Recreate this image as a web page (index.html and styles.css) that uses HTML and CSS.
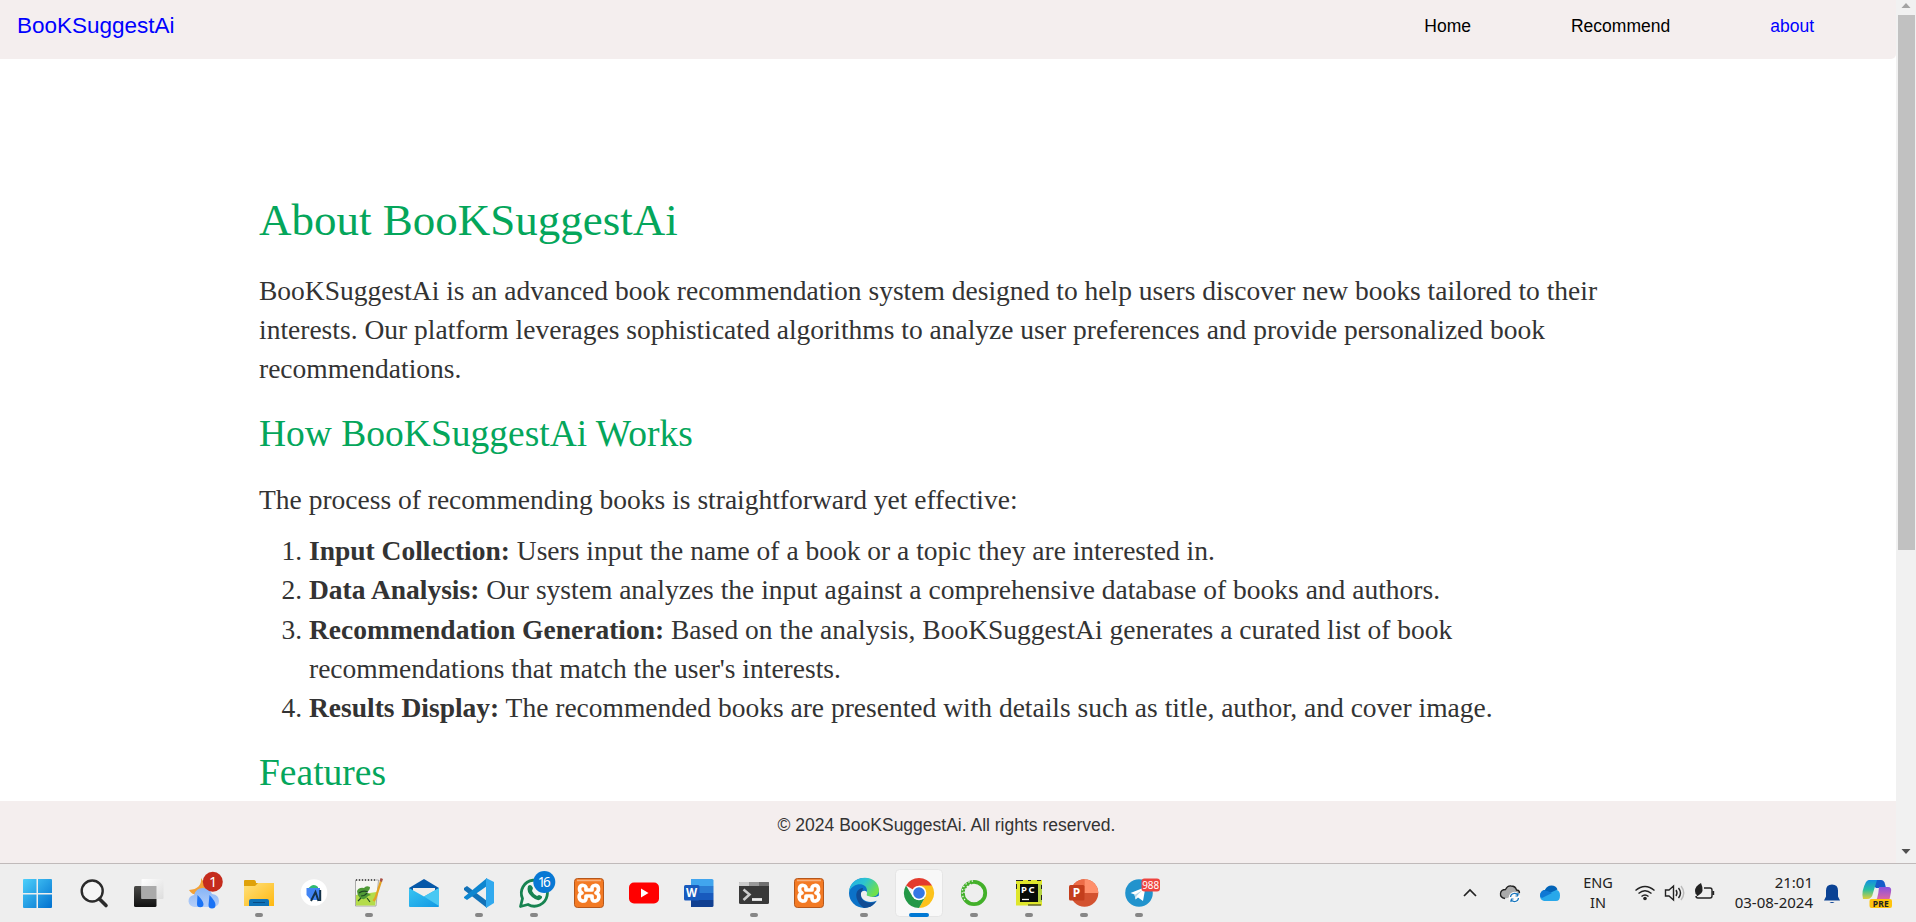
FILE: index.html
```html
<!DOCTYPE html>
<html lang="en">
<head>
<meta charset="utf-8">
<title>About BooKSuggestAi</title>
<link rel="stylesheet" href="styles.css">
</head>
<body>
<div class="screen">
  <div class="browser">
    <div class="page">
      <header class="nav">
        <a class="brand">BooKSuggestAi</a>
        <nav class="links"><a class="home">Home</a><a class="rec">Recommend</a><a class="active">about</a></nav>
      </header>
      <main class="content">
        <h1>About BooKSuggestAi</h1>
        <p class="intro">BooKSuggestAi is an advanced book recommendation system designed to help users discover new books tailored to their<br>interests. Our platform leverages sophisticated algorithms to analyze user preferences and provide personalized book<br>recommendations.</p>
        <h2 class="works">How BooKSuggestAi Works</h2>
        <p class="process">The process of recommending books is straightforward yet effective:</p>
        <ol>
          <li><b>Input Collection:</b> Users input the name of a book or a topic they are interested in.</li>
          <li><b>Data Analysis:</b> Our system analyzes the input against a comprehensive database of books and authors.</li>
          <li><b>Recommendation Generation:</b> Based on the analysis, BooKSuggestAi generates a curated list of book<br>recommendations that match the user's interests.</li>
          <li><b>Results Display:</b> The recommended books are presented with details such as title, author, and cover image.</li>
        </ol>
        <h2 class="features">Features</h2>
      </main>
      <footer class="foot">© 2024 BooKSuggestAi. All rights reserved.</footer>
    </div>
    <div class="scroll">
      <svg width="20" height="15" viewBox="0 0 20 15"><path d="M5.500 8h9L10 3z" fill="#a3a3a3"/></svg>
      <div class="thumb"></div>
      <svg class="down" width="20" height="20" viewBox="0 0 20 20"><path d="M5.500 6h9L10 11z" fill="#505050"/></svg>
    </div>
  </div>
  <div class="taskbar">
    <div class="apps">
      <svg viewBox="9 864 55 58"><defs><linearGradient id="win" x1="0" y1="0" x2="1" y2="1"><stop offset="0" stop-color="#4dd0fb"/><stop offset="1" stop-color="#0070cf"/></linearGradient></defs><path fill="url(#win)" d="M24 879h12.500v14H23v-13q0-1 1-1zM38 879h13q1 0 1 1v13H38zM23 894.500h13.500V908H24q-1 0-1-1zM38 894.500h14V907q0 1-1 1H38z"/></svg>
      <svg viewBox="64 864 55 58"><circle cx="92.200" cy="891" r="10.500" fill="#f5f5f5" stroke="#2b2b2b" stroke-width="2.400"/><path d="M99.500 899l6.500 6.500" stroke="#2b2b2b" stroke-width="3.600" stroke-linecap="round"/></svg>
      <svg viewBox="119 864 55 58"><defs><linearGradient id="tv" x1="0" y1="0" x2="0" y2="1"><stop offset="0" stop-color="#4a4a48"/><stop offset="1" stop-color="#111"/></linearGradient><linearGradient id="tw" x1="0" y1="0" x2="1" y2="1"><stop offset="0" stop-color="#fff"/><stop offset="1" stop-color="#ddd"/></linearGradient></defs><rect x="134" y="886" width="22.500" height="21" rx="1.500" fill="url(#tv)"/><rect x="141.500" y="879" width="22" height="20" rx="1" fill="url(#tw)"/><path d="M141.500 886h15v13h-15z" fill="#aaa"/></svg>
      <svg viewBox="174 864 55 58"><defs><linearGradient id="cl" x1="0" y1="0" x2="0" y2="1"><stop offset="0" stop-color="#87b5f7"/><stop offset="1" stop-color="#b5cef8"/></linearGradient></defs><path d="M201 878q1 11-12 12 4 7 14 4l5-6z" fill="#f2a238"/><path d="M195 907a6 6 0 0 1-1-12q2-7 9-7 7 0 9 6 7 1 7 7 0 6-7 6z" fill="url(#cl)"/><path d="M197.500 895q6 6 6 9a3.200 3.200 0 0 1-6.500 0zM209.500 895q6.500 7 6 10a3.500 3.500 0 0 1-7 0z" fill="#1972f5"/><circle cx="212.800" cy="881.800" r="10" fill="#c42b1c"/><text x="213.200" y="887" text-anchor="middle" font-size="14.500" fill="#fff">1</text></svg>
      <svg viewBox="229 864 55 58"><defs><linearGradient id="fo" x1="0" y1="0" x2="1" y2="1"><stop stop-color="#ffe17c"/><stop offset="1" stop-color="#ffb810"/></linearGradient></defs><path d="M244 888v-7q0-1 1-1h9q2 0 2 3h17q1 0 1 1v5z" fill="#dfa108"/><path d="M244 886h11l3-3h16v23h-30z" fill="url(#fo)"/><path d="M249 906v-5q0-2 2-2h16q2 0 2 2v5z" fill="#0f73b8"/><path d="M253 902.500h12" stroke="#084c85"/><rect class="dot" x="255" y="913" width="8" height="4" rx="2"/></svg>
      <svg viewBox="284 864 55 58"><circle cx="314" cy="892.500" r="13.300" fill="#fff"/><path d="M308 889q5-7 10-2v3h-10z" fill="#30ba72"/><path d="M306.500 888h13.500v12h-9l-4.500-5z" fill="#4285f4"/><path d="M311 901l4.500-9 3 9M320.200 890v11" fill="none" stroke="#143248" stroke-width="2"/></svg>
      <svg viewBox="339 864 55 58"><path d="M355.500 880h23l-2.500 26h-20.500z" fill="#f6f6f2" stroke="#999" stroke-width=".8"/><path d="M356 880h21" stroke="#333" stroke-width="1.600" stroke-dasharray="1 2"/><path d="M356 895l20.500-3-1.300 13.500H356z" fill="#b4dc4a"/><path d="M357 891q2-4 7-3 2-3 6-1 0 4-4 5l5 3-3 1q-3 5-8 2-3-3-3-7z" fill="#4f9a35"/><path d="M359 893q4-3 9-1m-7 4q4 0 6-3m-9 8l3-3m6 0l3 4" fill="none" stroke="#1f4a24" stroke-width="1.200"/><path d="M381 881l-5.500 17-2 3" fill="none" stroke="#e3a322" stroke-width="2.300"/><path d="M380.800 881.500l1-3" stroke="#a95045" stroke-width="2.500"/><rect class="dot" x="365" y="913" width="8" height="4" rx="2"/></svg>
      <svg viewBox="394 864 55 58"><defs><linearGradient id="ml" x1="0" y1="0" x2="1" y2="1"><stop stop-color="#38c5f2"/><stop offset="1" stop-color="#1298e3"/></linearGradient></defs><path d="M409 888l15-9 15 9v8h-30z" fill="#0758a8"/><path d="M413 888h22v10h-22z" fill="#f1eeeb"/><path d="M409 888l15 8.500 15-8.500v18q0 1-1 1h-28q-1 0-1-1z" fill="url(#ml)"/><path d="M424 896.500l15-8.500v18z" fill="#49c8f3"/></svg>
      <svg viewBox="449 864 55 58"><path d="M464 888l3-2 20 15v7L464 890z" fill="#1271b7"/><path d="M464 897l23-19v8l-20 14-3-2z" fill="#0d86d0"/><path d="M486 878l8 4v21l-8 5z" fill="#31a9ee"/><rect class="dot" x="475" y="913" width="8" height="4" rx="2"/></svg>
      <svg viewBox="504 864 55 58"><path d="M520.500 906.500l2-8a13 13 0 1 1 5.500 6z" fill="#f2f5f3" stroke="#178350" stroke-width="2.800" stroke-linejoin="round"/><path d="M528 886q3-3 5 2l-1 3q2 4 5 5l2-1q5 1 2 4-3 3-9-2-6-5-4-11z" fill="#178350"/><circle cx="544.300" cy="882" r="11" fill="#0878d4"/><text x="544.300" y="887" text-anchor="middle" font-size="13.500" textLength="13" fill="#fff">16</text><rect class="dot" x="530" y="913" width="8" height="4" rx="2"/></svg>
      <svg viewBox="559 864 55 58"><g id="xampp"><rect x="574.500" y="878.500" width="29" height="29" rx="3" fill="#f37a24" stroke="#b5571b"/><path d="M577 880.500h24" stroke="#f6b27f" stroke-width="1.500"/><path d="M583.500 885.500c-5-1-5 6-1.500 7.500-4.500 1-3.500 8.500 1.500 8 3 0 2.500-3.500 2.500-5h6c0 1.500-.5 5 2.500 5 5 .5 6-7 1.500-8 3.500-1.500 3.500-8.500-1.500-7.500-3 0-2.500 3-2.500 4.500h-6c0-1.500.5-4.500-2.500-4.500z" fill="none" stroke="#fff" stroke-width="3.700" stroke-linejoin="round"/></g></svg>
      <svg viewBox="614 864 55 58"><rect x="629" y="882.500" width="30" height="21" rx="5" fill="#f00"/><path d="M641 888.500v9l7.500-4.500z" fill="#fff"/></svg>
      <svg viewBox="669 864 55 58"><path d="M691 879h21q1.500 0 1.500 1.500V886H691z" fill="#41a5ee"/><path d="M691 886h22.500v7H691z" fill="#2b7cd3"/><path d="M691 893h22.500v7H691z" fill="#185abd"/><path d="M691 900h22.500v5.500q0 1.500-1.500 1.500h-21z" fill="#103f91"/><rect x="684" y="885" width="15.500" height="15.500" rx="1.500" fill="#185abd"/><text x="691.600" y="896.800" font-size="11.500" font-weight="bold" text-anchor="middle" fill="#fff">W</text></svg>
      <svg viewBox="724 864 55 58"><rect x="739" y="882" width="30" height="22" rx="1.500" fill="#393939"/><path d="M739 886v-3q0-1 1-1h9v4z" fill="#ccc"/><path d="M749 882h10v4h-10z" fill="#999"/><path d="M759 882h9q1 0 1 1v3h-10z" fill="#707070"/><path d="M743.500 889.500l6 5-6 5.500" fill="none" stroke="#ccc" stroke-width="2.500"/><path d="M752 899.500h10" stroke="#eee" stroke-width="2.800"/><rect class="dot" x="750" y="913" width="8" height="4" rx="2"/></svg>
      <svg viewBox="559 864 55 58"><use href="#xampp"/></svg>
      <svg viewBox="834 864 55 58"><defs><linearGradient id="ed" x1="0" y1="0" x2="1" y2=".5"><stop stop-color="#23a9e9"/><stop offset=".5" stop-color="#2cc4cf"/><stop offset="1" stop-color="#70e04b"/></linearGradient></defs><circle cx="864" cy="893" r="15" fill="#0b72c8"/><path d="M849 892c1-18 29-19 30-2 0 7-7 8-12 6-3-1 0-2 0-5 0-9-14-9-18 1z" fill="url(#ed)"/><path d="M863 888c-10 1-8 14 1 19.900 5 .1 9-2 12-6.500-8 4-18-2-14-9z" fill="#114c94"/><path d="M861 893c-1 7 7 11 15 8l4-1v-5c-4 3-9 2-12 1-2-1-1-1-1-3 0-3-5-3-6 0z" fill="#eee"/><rect class="dot" x="860" y="913" width="8" height="4" rx="2"/></svg>
      <svg viewBox="889 864 55 58"><rect x="895.500" y="869.500" width="47" height="47" rx="4" fill="#f8f8f8" stroke="#e5e5e5"/><path d="M919 893L906 885.500A15 15 0 0 1 932 885.500z" fill="#e33b2e"/><path d="M919 885.500h13A15 15 0 0 1 919 908l6.500-11.500z" fill="#fcc21b"/><path d="M912.500 896.500L906 885.500A15 15 0 0 0 919 908l6.500-11.500z" fill="#249847"/><circle cx="919" cy="893" r="7.300" fill="#fff"/><circle cx="919" cy="893" r="5.800" fill="#3578e5"/><rect x="909" y="913" width="20" height="4" rx="2" fill="#0078d4"/></svg>
      <svg viewBox="944 864 55 58"><circle cx="974" cy="893" r="11.200" fill="none" stroke="#43b02a" stroke-width="3.800"/><path d="M965 900a11.500 11.500 0 0 1 8.500-19M964 893a10 10 0 0 1 9-9" fill="none" stroke="#eee" stroke-width="1.300" stroke-dasharray="1.400 2"/><rect class="dot" x="970" y="913" width="8" height="4" rx="2"/></svg>
      <svg viewBox="999 864 55 58"><path d="M1016 880h26v25.500h-26z" fill="#dfe62b"/><path d="M1038 884h4v18h-4z" fill="#b5d342"/><path d="M1016 880.500h7M1028 880.500h3M1037 880.500h4M1016.500 884v5M1041.500 885v4M1041.500 895v5M1028 905h13" stroke="#222"/><path d="M1020 884h18v18h-18z" fill="#080c08"/><text x="1021" y="892.700" font-size="9.500" font-weight="bold" fill="#fff" textLength="13.500">PC</text><path d="M1022 899.500h7" stroke="#fff" stroke-width="1.300"/><rect class="dot" x="1025" y="913" width="8" height="4" rx="2"/></svg>
      <svg viewBox="1054 864 55 58"><circle cx="1084.500" cy="893" r="13.800" fill="#d35230"/><path d="M1084.500 879.200a13.800 13.800 0 0 0-13.800 13.800h13.800z" fill="#ed6c47"/><path d="M1084.500 879.200a13.800 13.800 0 0 1 13.800 13.800h-13.800z" fill="#ff8f6b"/><rect x="1069" y="885" width="15.500" height="15.500" rx="1.500" fill="#c43e1c"/><text x="1076.500" y="897" font-size="12" font-weight="bold" text-anchor="middle" fill="#fff">P</text><rect class="dot" x="1080" y="913" width="8" height="4" rx="2"/></svg>
      <svg viewBox="1109 864 55 58"><circle cx="1139" cy="893" r="13.800" fill="#2193cd"/><path d="M1130.500 893l15-6-2.500 14-5-3.500-2.500 2-1-5z" fill="#fff"/><path d="M1134.500 895l8-5-6 6-.5 3z" fill="#b7d8e9"/><rect x="1141.500" y="878.500" width="18.500" height="13" rx="3" fill="#ee4540"/><text x="1150.700" y="889.200" font-size="11.500" text-anchor="middle" textLength="17" lengthAdjust="spacingAndGlyphs" fill="#fff">988</text><rect class="dot" x="1135" y="913" width="8" height="4" rx="2"/></svg>
    </div>
    <div class="tray">
      <svg class="status" viewBox="1450 864 120 58"><path d="M1464 896l6-6 6 6" fill="none" stroke="#222" stroke-width="1.700"/><path d="M1505 898.500q-5-1-4.500-5t5-4q2-4 5.500-3.500 4.500 0 5.500 4 4 0 3 5z" fill="#aaa"/><path d="M1505 898.500q-5-1-4.500-5t5-4q2-4 5.500-3.500 4.500 0 5.500 4 3 0 3 3" fill="none" stroke="#222" stroke-width="1.300"/><circle cx="1514.500" cy="897.500" r="5.800" fill="#fafafa"/><path d="M1510.500 897a4 4 0 0 1 7.500-1.500v-2.500m0 3h-2.500M1518.500 898a4 4 0 0 1-7.500 1.500v2.500m0-3h2.500" fill="none" stroke="#1474bd" stroke-width="1.200"/><path d="M1544 901q-4-1-4-5 0-5 5-6 2-4 6-4 4 0 5.500 4 3.500.5 3.500 5.500 0 5.500-4 5.500z" fill="#28a8ea"/><path d="M1541 893q1-3 4-3 2-4.500 6.500-4.500 4.500 0 6 4l-9 4z" fill="#0364b8"/><path d="M1540 896q0-5 4-5.500 3-.5 8 2.500l-10 5q-2-1-2-2z" fill="#0f78d4"/></svg>
      <div class="lang">ENG<br>IN</div>
      <svg class="system" viewBox="1630 864 95 58"><g fill="none" stroke="#222" stroke-width="1.400"><path d="M1635.500 890.500q9.500-8 19 0M1638.500 893.500q6.500-5.500 13 0M1641.500 896.500q3.500-3 7 0"/><path d="M1665.500 890h3.500l4.500-4v14l-4.500-4h-3.500zM1676 890q2 3 0 6M1678.500 888q4 5 0 10"/><path d="M1681 886q5.500 7 0 14" stroke="#bbb"/><path d="M1704 888h6q2 0 2 2v6q0 2-2 2h-12q-2 0-2-2M1713.500 891v4"/></g><circle cx="1645" cy="898.500" r="1.800" fill="#222"/><path d="M1701 883q-6 3-6 8 0 3 2 4l-1 2 3-2q6-3 2-12z" fill="#222"/></svg>
      <div class="clock">21:01<br>03-08-2024</div>
      <svg class="end" viewBox="1820 864 96 58"><defs><linearGradient id="co" x1="0" y1="0" x2="0" y2="1"><stop stop-color="#128ee2"/><stop offset=".5" stop-color="#28bfa2"/><stop offset="1" stop-color="#e2ce38"/></linearGradient><linearGradient id="cp" x1="0" y1="0" x2="0" y2="1"><stop stop-color="#8852df"/><stop offset="1" stop-color="#f16b93"/></linearGradient></defs><path d="M1824 900.500l2-4v-6q0-6 6-6t6 6v6l2 4z" fill="#0a4294"/><path d="M1829.500 902h5q-2.500 2-5 0z" fill="#0a4294"/><path d="M1868 880h13q3 0 4 4l1 4h-10z" fill="#155cc9"/><path d="M1863 899q-2-8 3-17 1-2 4-2h7l-4 13q-1 6-6 6z" fill="url(#co)"/><path d="M1879 887h9q4 0 3 5l-2 10h-15q4-1 5-15z" fill="url(#cp)"/><rect x="1869.500" y="899" width="22.500" height="9" rx="2" fill="#ffc40c"/><text x="1880.700" y="906.800" font-size="8.500" font-weight="bold" text-anchor="middle" textLength="16" fill="#222">PRE</text></svg>
    </div>
  </div>
</div>
</body>
</html>
```
FILE: styles.css
```css
* { box-sizing: border-box; }
body { margin: 0; overflow: hidden; background: #fff; }
.screen { width: 1916px; height: 922px; display: flex; flex-direction: column; }
.browser { height: 863px; display: flex; }
.page { width: 1896px; display: flex; flex-direction: column; }
.nav { height: 59px; flex: none; background: #f4eeee; border-radius: 0 0 5px 0; display: flex; justify-content: space-between; font-family: "Liberation Sans", Arial, sans-serif; padding: 11px 82px 0 17px; }
.brand { color: #00f; font-size: 22.5px; line-height: 30px; }
.links { display: flex; gap: 100px; font-size: 17.5px; line-height: 30px; color: #000; }
.active { color: #00f; }
.content { flex: 1; min-height: 0; overflow: hidden; padding: 131px 0 0 259px; font-family: "Liberation Serif", "Times New Roman", serif; font-size: 27.5px; line-height: 39.2px; color: #333; white-space: nowrap; }
h1, h2, p, ol { margin: 0; font-weight: normal; }
h1 { font-size: 45px; line-height: 60px; color: #04a65b; }
h2 { font-size: 37.5px; line-height: 50px; color: #04a65b; }
.intro { margin-top: 21px; }
.works { margin-top: 20px; }
.process { margin-top: 21px; }
ol { padding-left: 50px; margin-top: 12px; line-height: 39.4px; }
.features { margin-top: 20px; }
.foot { height: 62px; flex: none; background: #f4eeee; text-align: center; padding: 8px 3px 0 0; font-family: "Liberation Sans", Arial, sans-serif; font-size: 17.5px; line-height: 32px; color: #333; }
.scroll { width: 20px; background: #f1f1f1; display: flex; flex-direction: column; }
.scroll svg { display: block; }
.thumb { width: 17px; height: 535px; margin-left: 2px; background: #c1c1c1; }
.scroll .down { margin-top: auto; }
.taskbar { height: 59px; border-top: 1px solid #c0baba; background: #eee; display: flex; justify-content: space-between; font-family: "Noto Sans", "Open Sans", sans-serif; }
.apps { display: flex; padding-left: 9px; }
.apps svg { width: 55px; height: 58px; display: block; }
.dot { fill: #868686; }
.tray { display: flex; font-size: 15px; line-height: 20px; color: #222; }
.tray svg { display: block; height: 58px; }
.status { width: 120px; }
.lang { width: 60px; padding: 8px 4px 0 0; text-align: center; font-size: 14.5px; }
.system { width: 95px; }
.clock { width: 95px; padding: 8px 7px 0 0; text-align: right; }
.end { width: 96px; }
```
